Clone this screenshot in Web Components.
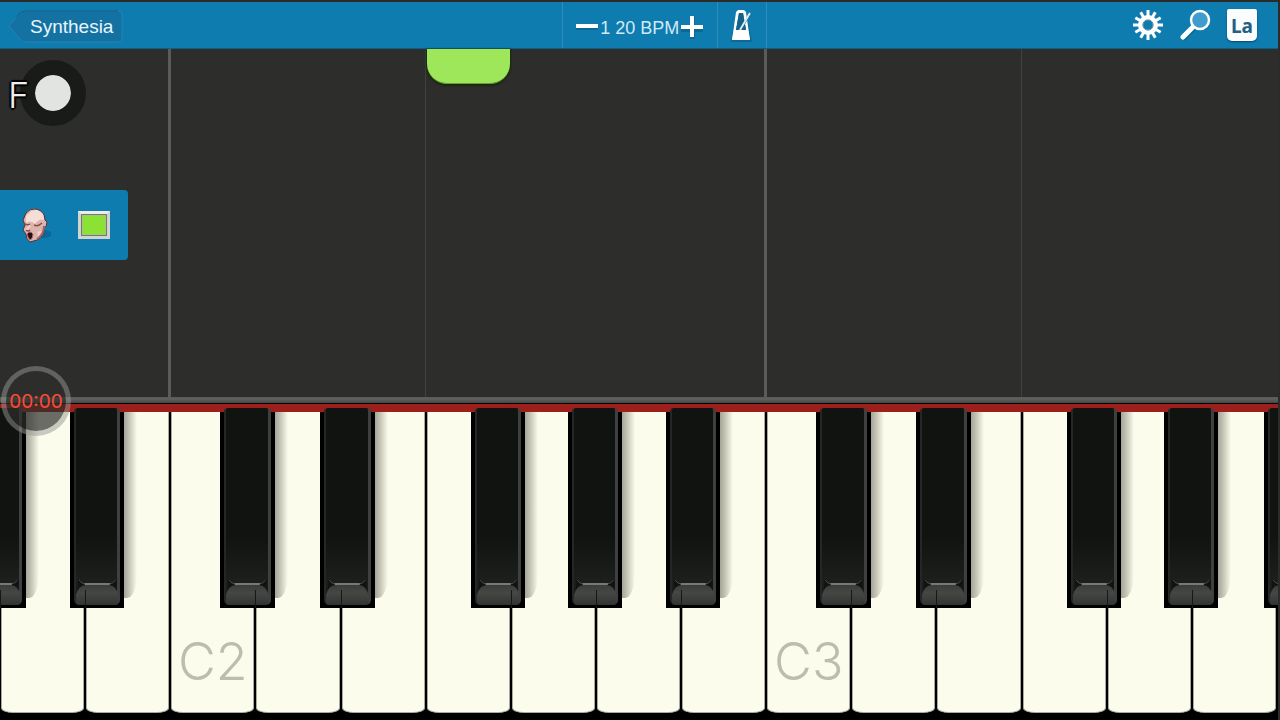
<!DOCTYPE html>
<html lang="en">
<head>
<meta charset="utf-8">
<title>Synthesia</title>
<style>
html, body { margin: 0; height: 100%; background: #2b2c2a; }
</style>
</head>
<body>
<synth-app></synth-app>
<script>
class Base extends HTMLElement {
  constructor() {
    super();
    this.attachShadow({ mode: 'open' });
  }
  connectedCallback() {
    this.shadowRoot.innerHTML =
      '<style>*{box-sizing:border-box}:host{box-sizing:border-box}button,a{font:inherit;color:inherit;border:0;padding:0;margin:0;background:none}svg{display:block}</style>' + this.render();
  }
}

class SynthApp extends Base {
  render() {
    return `<style>
      :host { display: grid; grid-template-rows: 47px minmax(0, 348fr) minmax(0, 323fr); height: 100vh; min-height: 480px;
        padding: 2px 2px 0 0; overflow: hidden; background: #2b2c2a;
        font-family: Inter, "Liberation Sans", sans-serif; }
    </style>
    <top-bar></top-bar><note-roll></note-roll><piano-keyboard></piano-keyboard>`;
  }
}

class TopBar extends Base {
  render() {
    return `<style>
      :host { display: grid; grid-template-columns: 44% auto auto 1fr; background: #0f7cb0; color: #eaf5fb; border-bottom: 1px solid #0d5f88; }
      nav { display: flex; align-items: center; padding: 4px 0 0 8px; }
      .back { display: grid; align-items: center; width: 116px; height: 34px; text-decoration: none; font: 19px/24px "Liberation Sans", sans-serif; }
      .back svg, .back span { grid-area: 1 / 1; }
      .back span { padding-left: 22px; }
      .tempo, .metro { display: flex; align-items: center; border-left: 1px solid #2f8dbb; }
      .tempo { width: 155px; padding-left: 13px; gap: 2px; }
      output { width: 79px; text-align: center; font: 18px/24px "Liberation Sans", sans-serif; color: #cfe9f6; padding-top: 5px; white-space: nowrap; }
      .tempo button { flex: none; padding-top: 3px; }
      .metro { width: 50px; justify-content: center; border-right: 1px solid #2f8dbb; }
      .tools { display: flex; align-items: center; justify-content: flex-end; gap: 16px; padding-right: 21px; }
      .la { width: 30px; height: 32px; border-radius: 2px 2px 5px 5px; background: #fafcfd; color: #235f82; font: 700 19px/28px "Noto Sans", sans-serif; padding-top: 2px; box-shadow: 0 1px 2px #07496c; }
    </style>
    <nav><a class="back" href="#songs">
      <svg width="116" height="34" viewBox="0 0 116 34"><path d="M1 16 11 4Q14 1 18 1H110Q114 1 114 5V28Q114 32 110 32H18Q14 32 11 28Z" fill="#1472a3" stroke="#2583b1"/><path d="M8 7 11 4Q14 1 18 1H110" fill="none" stroke="#0d5c87"/></svg>
      <span>Synthesia</span></a></nav>
    <div class="tempo">
      <button aria-label="Slower"><svg width="22" height="22"><path d="M0 9H22V14H0Z" fill="#084d70" opacity=".4"/><path d="M0 8H22V12H0Z" fill="#fff"/></svg></button>
      <output>1 20 BPM</output>
      <button aria-label="Faster"><svg width="22" height="24"><path d="M0 12H9V1H14V12H22V17H14V24H9V17H0Z" fill="#084d70" opacity=".4"/><path d="M0 10H9V1H13V10H22V14H13V22H9V14H0Z" fill="#fff"/></svg></button>
    </div>
    <button class="metro" aria-label="Metronome"><svg width="24" height="34" viewBox="0 0 24 34">
      <path d="M6 4 8 2H14L16 4 22 34H1Z" fill="#085579" opacity=".5"/>
      <path fill="#fff" fill-rule="evenodd" d="M6 4 8 2H14L16 4 20 32H2ZM9 5 6 22H16L13 5Z"/>
      <path d="M9 5H13L16 22H6Z" fill="#11638c"/>
      <path d="M21 5 11 22" stroke="#0c506f" stroke-width="1"/><path d="M20 5 10 22" stroke="#dcedf4" stroke-width="2"/><path d="M4 22H18L20 32H2Z" fill="#fff"/></svg></button>
    <div class="tools">
      <button aria-label="Settings"><svg width="32" height="34" viewBox="-16 -17 32 34"><g stroke="#fff" stroke-width="3">
        <path d="M0-9V-15M0 9V15M-9 0H-15M9 0H15M4.5-7.8 7.3-12.7M-4.5 7.8-7.3 12.7M-4.5-7.8-7.3-12.7M4.5 7.8 7.3 12.7M7.8-4.5 12.7-7.3M-7.8 4.5-12.7 7.3M-7.8-4.5-12.7-7.3M7.8 4.5 12.7 7.3"/></g>
        <circle r="7.5" fill="none" stroke="#fff" stroke-width="5"/><circle r="5.2" fill="none" stroke="#75909b"/></svg></button>
      <button aria-label="Zoom"><svg width="31" height="34" viewBox="0 0 31 34"><path d="M3 31 14 20" stroke="#0a5378" stroke-width="5" opacity=".6"/><path d="M3 29 14 18" stroke="#fff" stroke-width="5" stroke-linecap="round"/><circle cx="20" cy="12" r="9" fill="#3f9ccc" stroke="#fff" stroke-width="2.5"/></svg></button>
      <button class="la">La</button>
    </div>`;
  }
}

class NoteRoll extends Base {
  render() {
    return `<style>
      :host { display: grid; grid-template-columns: repeat(15, 1fr); position: relative; padding-right: 1px; background: #2d2e2c; }
      i { grid-row: 1; border-left: 1px solid #414240; margin-left: -1px; }
      i.c { border-left: 3px solid #5b5c5a; margin-left: -2px; }
      .note { grid-row: 1; grid-column: 6; height: 35px; margin: 0 1px; background: #9ee65a; border-radius: 0 0 20px 20px; border-bottom: 1px solid #6a9b3c; box-shadow: 0 1px 2px 1px #182908; z-index: 1; }
      aside { position: absolute; inset: 0 auto auto 0; display: flex; flex-direction: column; align-items: flex-start; gap: 64px; padding-top: 11px; }
      .hand { display: flex; align-items: center; padding-left: 8px; }
      .hand span { font: 300 36px/44px Inter, sans-serif; width: 12px; color: #eee; z-index: 1; padding-top: 4px;
        text-shadow: 2px 0 1px #000, -2px 0 1px #000, 0 2px 1px #000, 0 -2px 1px #000, 1px 1px 1px #000; }
      .hand button { width: 66px; height: 66px; border-radius: 50%; border: 15px solid #191b18; background: #e2e4e1; background-clip: padding-box; }
      .track { display: flex; align-items: center; gap: 27px; width: 128px; height: 70px; padding-left: 19px; background: #0f7cb0; border-radius: 0 4px 4px 0; }
      .swatch { width: 32px; height: 28px; border: 3px solid #d2d4d0; border-top-color: #eceeeb; background: #8be234; box-shadow: inset 0 0 0 1px #74786f, inset 0 0 0 2px #a0c878; }
    </style>
    <i class="c" style="grid-column:3"></i><i style="grid-column:6"></i><i class="c" style="grid-column:10"></i><i style="grid-column:13"></i>
    <div class="note"></div>
    <aside>
      <div class="hand"><span>F</span><button aria-label="Finger hint"></button></div>
      <div class="track">
        <button aria-label="Instrument: voice"><svg width="32" height="38" viewBox="0 0 32 38">
          <ellipse cx="24" cy="28" rx="9" ry="4" fill="#075079" opacity=".45"/>
          <path d="M7 7Q11 2 17 3Q26 5 26 14L28 16Q28 21 25 22Q26 30 18 34L11 36Q7 33 7 28L4 24 6 19 4 14Z" fill="#ddb3ae" stroke="#572f31"/>
          <path d="M7 10Q12 3 18 4Q25 6 25 14 20 12 16 18 12 14 7 17Z" fill="#f6ddd6"/>
          <path d="M10 19 6 24 9 24 12 20M18 26Q24 23 23 28L17 33Q20 30 18 26" fill="#f0d0ca"/>
          <path d="M5 17Q8 20 11 18M15 19Q19 21 23 17M7 24Q9 26 11 24" fill="none" stroke="#8c4c4c" stroke-width="1.5"/>
          <path d="M8 28Q11 24 14 28 14 33 11 34Q9 32 8 28Z" fill="#251112" stroke="#b7696b"/>
          <path d="M25 20Q25 28 18 33" fill="none" stroke="#a66364" stroke-width="2"/></svg></button>
        <button class="swatch" aria-label="Track colour"></button>
      </div>
    </aside>`;
  }
}

class PianoKeyboard extends Base {
  render() {
    const names = 'ABCDEFGABCDEFGA';
    // Offset of the sharp left of each note, as a percentage of a white key's width.
    const shift = { A: -33, B: -18, D: -41, E: -24, G: -47 };
    const labels = { 2: 'C2', 9: 'C3' };
    const keys = [...names].map((n, i) =>
      `<piano-key note="${n}" label="${labels[i] || ''}"${n in shift ? ` shift="${shift[n]}"` : ''}></piano-key>`).join('');
    return `<style>
      :host { display: grid; grid-template-rows: 6px 1px 8px minmax(0, 1fr); position: relative; background: #000; }
      .rail { background: linear-gradient(#565856, #60625f 30%, #454745); }
      .felt { grid-row: 3; background: #9c1f1b; }
      .edge { position: absolute; inset: 11px 0 0; overflow: hidden; display: grid; padding: 4px 1px 7px 0; }
      .keys { display: grid; grid-template-columns: repeat(15, minmax(0, 1fr)); }
      .next { position: absolute; left: 100%; top: 4px; bottom: 7px; width: calc(100% / 15); }
      time { position: absolute; z-index: 9; left: 1px; top: -31px; width: 70px; height: 70px; border-radius: 50%;
        border: 5px solid rgba(150,152,148,.5); background: rgba(45,47,44,.7); background-clip: padding-box; display: flex; align-items: center; justify-content: center;
        font: 400 19px/24px Inter, sans-serif; color: #ff4a36; padding-top: 2px; }
    </style>
    <div class="rail"></div><div class="felt"></div>
    <div class="edge"><div class="keys">${keys}</div><piano-key class="next" shift="-17"></piano-key></div>
    <time>00:00</time>`;
  }
}

class PianoKey extends Base {
  render() {
    const s = this.getAttribute('shift');
    const note = this.getAttribute('note');
    const label = this.getAttribute('label') || '';
    return `<style>
      :host { display: grid; position: relative; }
      .white { display: flex; align-items: flex-end; justify-content: center; margin: 0 1px; padding-bottom: 17px; background: #fbfceb;
        border: solid #a9aa9e; border-width: 0 1px 1px; border-radius: 0 0 12px 12px / 0 0 5px 5px;
        font: 300 52px/66px Inter, sans-serif; color: #bcbdad; }
      .sharp { position: absolute; z-index: 2; top: -4px; left: ${s}%; width: 64%; height: calc(65% + 4px); }
      .sharp::before { content: ""; position: absolute; inset: 4px 0 0; background: #000; }
      .sharp::after { content: ""; position: absolute; left: 100%; top: 4px; bottom: 10px; width: 13px;
        background: linear-gradient(90deg, rgba(80,80,68,.5), rgba(80,80,68,.32) 40%, transparent); border-radius: 0 0 10px 0 / 0 0 24px 0; }
      .body { position: absolute; inset: 0 4px 3px; border-radius: 4px 4px 5px 5px; border: solid; border-width: 0 3px 0 2px; border-color: #111 #3d403e #111 #232726;
        background: linear-gradient(#111310 65%, #1d1f1d 88%, #151615); }
      .cap { position: absolute; left: -1px; right: -2px; bottom: 0; width: calc(100% + 3px); height: 26px; }
      .seam { position: absolute; z-index: 3; left: 0; top: 59%; width: 1px; height: 6%; background: #161716; }
    </style>
    ${note ? `<button class="white" aria-label="${label || note}">${label}</button>` : ''}
    ${s ? `<button class="sharp" aria-label="Sharp"><span class="body">
      <svg class="cap" viewBox="0 0 46 26" preserveAspectRatio="none">
        <defs><linearGradient id="g" x2="0" y2="1"><stop stop-color="#3b3d3b"/><stop offset=".4" stop-color="#454745"/><stop offset="1" stop-color="#323433"/></linearGradient></defs>
        <path d="M3 0 9 5H37L43 0V12H3Z" fill="#111211"/>
        <path d="M1 24V16Q4 6 11 6H35Q42 6 45 16V24Q44 26 42 26H4Q2 26 1 24Z" fill="url(#g)"/>
        <path d="M4 1Q7 5 11 5H35Q39 5 42 1" fill="none" stroke="#4a4c4a"/>
        <path d="M10 5H36" stroke="#777976" stroke-width="2"/>
      </svg></span></button><span class="seam"></span>` : ''}`;
  }
}

customElements.define('piano-key', PianoKey);
customElements.define('piano-keyboard', PianoKeyboard);
customElements.define('note-roll', NoteRoll);
customElements.define('top-bar', TopBar);
customElements.define('synth-app', SynthApp);
</script>
</body>
</html>
